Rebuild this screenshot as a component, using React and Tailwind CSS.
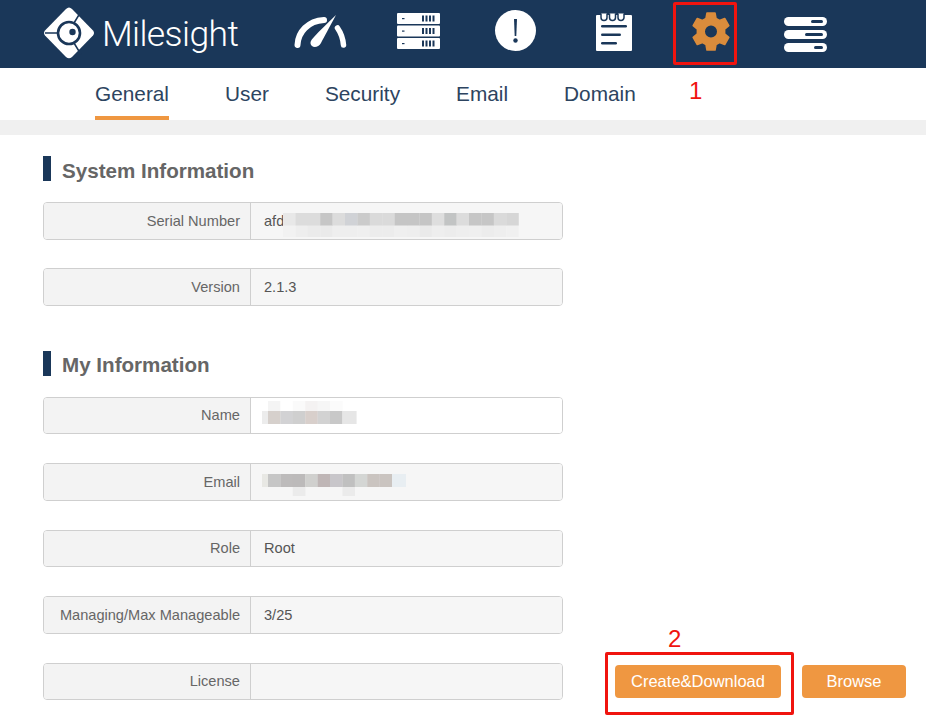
const FONT = "font-['Liberation_Sans',Arial,sans-serif]";

function Logo() {
  return (
    <svg width="52" height="52" viewBox="0 0 52 52" className="shrink-0">
      <path d="M26 0.5 Q27.5 0.5 29 2 L50 23.5 Q52 26 50 28.5 L29 50 Q26 52.5 23 50 L2 28.5 Q0 26 2 23.5 L23 2 Q24.5 0.5 26 0.5Z" fill="#fff" />
      <path d="M2 26 L15 26 M31 16 L38 4.5 M31 36 L38 47.5" stroke="#1a3759" strokeWidth="1.5" fill="none" />
      <circle cx="26" cy="26" r="11" fill="#fff" stroke="#1a3759" strokeWidth="2.6" />
      <circle cx="29.5" cy="25" r="3.2" fill="#1a3759" />
    </svg>
  );
}

function Gauge() {
  return (
    <svg width="53" height="33" viewBox="0 0 53 33" className="shrink-0">
      <path d="M3.5 30 C4 17 14 6 30 5" stroke="#fff" strokeWidth="6" strokeLinecap="round" fill="none" />
      <path d="M43.5 13 C47 18 49 24 49.5 30" stroke="#fff" strokeWidth="5.5" strokeLinecap="round" fill="none" />
      <path d="M42 0 C35 13 30 22 27 28 C25 32 20 33 18 31 C15 28 17 25 20 22 C26 15 34 8 42 0Z" fill="#fff" />
    </svg>
  );
}

function Server() {
  const rows = [0, 12.5, 25];
  return (
    <svg width="43" height="37" viewBox="0 0 43 37" className="shrink-0">
      {rows.map((y) => (
        <g key={y}>
          <rect x="0" y={y} width="43" height="11" rx="1" fill="#fff" />
          <rect x="5" y={y + 5} width="2.5" height="1.2" fill="#1a3759" />
          {[25, 28.5, 32, 35.5].map((x) => (
            <rect key={x} x={x} y={y + 2.5} width="2" height="6" fill="#1a3759" />
          ))}
        </g>
      ))}
    </svg>
  );
}

function Alert() {
  return (
    <svg width="41" height="41" viewBox="0 0 41 41" className="shrink-0">
      <circle cx="20.5" cy="20.5" r="20.5" fill="#fff" />
      <path d="M19 9 L22 9 L21.3 26 L19.7 26Z" fill="#1a3759" />
      <circle cx="20.5" cy="30.5" r="2.2" fill="#1a3759" />
    </svg>
  );
}

function Notebook() {
  return (
    <svg width="36" height="40" viewBox="0 0 36 40" className="shrink-0">
      <path d="M1 4 H35 Q36 4 36 5 V39 Q36 40 35 40 H1 Q0 40 0 39 V5 Q0 4 1 4Z" fill="#fff" />
      {[8, 16.5, 25].map((x) => (
        <path key={x} d={`M${x - 3} 2.5 V6.5 A3 3 0 0 0 ${x + 3} 6.5 V2.5`} fill="#fff" stroke="#1a3759" strokeWidth="1.5" />
      ))}
      <rect x="5" y="14" width="26" height="2.6" rx="1.3" fill="#1a3759" />
      <rect x="5" y="22.5" width="20" height="2.6" rx="1.3" fill="#1a3759" />
      <rect x="5" y="31" width="16" height="2.6" rx="1.3" fill="#1a3759" />
    </svg>
  );
}

function Gear() {
  return (
    <svg width="38" height="39" viewBox="0 0 38 39" className="shrink-0">
      <path
        fillRule="evenodd"
        fill="#da8c3c"
        stroke="#da8c3c"
        strokeWidth="1.6"
        strokeLinejoin="round"
        d="M15 1 H23 L24 6.5 L27.5 8.4 L32.7 6.5 L36.8 13.6 L32.6 17.2 V21.8 L36.8 25.4 L32.7 32.5 L27.5 30.6 L24 32.5 L23 38 H15 L14 32.5 L10.5 30.6 L5.3 32.5 L1.2 25.4 L5.4 21.8 V17.2 L1.2 13.6 L5.3 6.5 L10.5 8.4 L14 6.5Z M19 12.7 A6.8 6.8 0 1 0 19 26.3 A6.8 6.8 0 1 0 19 12.7Z"
      />
    </svg>
  );
}

function Sliders() {
  const rows = [
    { y: 0, x: 27, w: 12 },
    { y: 13, x: 21, w: 18 },
    { y: 26, x: 30, w: 9 },
  ];
  return (
    <svg width="43" height="35" viewBox="0 0 43 35" className="shrink-0">
      {rows.map((r) => (
        <g key={r.y}>
          <rect x="0" y={r.y} width="43" height="9" rx="4.5" fill="#fff" />
          <rect x={r.x} y={r.y + 3} width={r.w} height="3" rx="1.5" fill="#1a3759" />
        </g>
      ))}
    </svg>
  );
}

/* pixelated redaction patch: a list of [x, y, w, h, colour] */
function Pixels({ width, height, className, cells }) {
  return (
    <svg width={width} height={height} viewBox={`0 0 ${width} ${height}`} className={className}>
      {cells.map(([x, y, w, h, c], i) => (
        <rect key={i} x={x} y={y} width={w + 0.2} height={h} fill={c} />
      ))}
    </svg>
  );
}

const CELL = 12.4;
const rowOf = (colours, y, h, start = 0) =>
  colours.map((c, i) => [start + i * CELL, y, CELL, h, c]);

const SERIAL = [
  ...rowOf(["#f2f2f2", "#eeeeee", "#ebebeb", "#eaeaea", "#eeeeee", "#eeeeee", "#efefef", "#ececec", "#ececec", "#efefef", "#eeeeee", "#eaeaea", "#eeeeee", "#ececec", "#eeeeee", "#efefef", "#ececec", "#eeeeee", "#f0f0f0"], 13, 12),
  ...rowOf(["#e8e8e8", "#dcdcdc", "#dcdcdc", "#c6c6c6", "#dcdcdc", "#d0d2d6", "#cbcbcb", "#dadada", "#dadada", "#c5c5c5", "#c5c5c5", "#c5c5c5", "#dedede", "#c2c4c4", "#dcdcdc", "#c6c6c6", "#c6c6c6", "#dadada", "#d6d6d6"], 1, 12.5),
];

const NAME = [
  ...rowOf(["#f4f4f4", "#ffffff", "#fafafa", "#f4f2f2", "#f6f6f6", "#fbfbfb"], 0, 10, 6),
  [0, 10, 6, 13, "#ececec"],
  ...rowOf(["#d6d0cc", "#d2d2d4", "#cfcfcf", "#d8cfcb", "#d2d2d2", "#c8c8c8"], 10, 13, 6),
  [80.4, 10, 14, 13, "#e6e6e6"],
];

const EMAIL = [
  [0, 0, 6, 13, "#e8e8e4"],
  ...rowOf(["#c6c6c6", "#bdbbbb", "#bcbaba", "#d0d0ce", "#bfb6b6", "#c8c6ca", "#c0c0c0", "#d4d6d4", "#cac4c0", "#cac4c0"], 0, 13, 6),
  [130, 0, 14, "13", "#e8eef2"],
  [30.8, 13, 12.4, 9, "#ebebeb"],
  [80.4, 13, 12.4, 9, "#ebebeb"],
];

function Row({ label, children, white = false }) {
  return (
    <div className="flex h-[37.5px] w-[520px] shrink-0 overflow-hidden rounded-[4px] border border-[#cfcfcf]">
      <div className="flex w-[207px] shrink-0 items-center justify-end border-r border-[#cfcfcf] bg-[#f3f3f3] pr-[10px] pt-[1.5px] text-[14.6px] text-[#666]">
        {label}
      </div>
      <div className={`relative flex flex-1 items-center pl-[13px] pt-[1.5px] text-[14.6px] text-[#555] ${white ? "bg-white" : "bg-[#f6f6f6]"}`}>
        {children}
      </div>
    </div>
  );
}

function Heading({ children }) {
  return (
    <div className="flex h-[25px] items-center gap-[11px]">
      <div className="h-[25px] w-[8px] bg-[#1a3759]" />
      <h2 className="pt-[4px] text-[20.6px] font-bold leading-[28px] text-[#666]">{children}</h2>
    </div>
  );
}

export default function App() {
  return (
    <div className={`relative h-[726px] w-[926px] overflow-hidden bg-white ${FONT}`}>
      <header className="flex h-[68px] items-start bg-[#1a3759] pl-[43px]">
        <div className="mt-[5px] flex items-center">
          <Logo />
          <span className="ml-[7px] w-[136px] pt-[3px] font-['Roboto',sans-serif] text-[35.5px] font-light leading-[52px] tracking-[-0.6px] text-white">
            Milesight
          </span>
        </div>
        <div className="ml-[56px] mt-[15px]"><Gauge /></div>
        <div className="ml-[50px] mt-[13px]"><Server /></div>
        <div className="ml-[55px] mt-[10px]"><Alert /></div>
        <div className="ml-[60px] mt-[11px]"><Notebook /></div>
        <div className="ml-[60px] mt-[12px]"><Gear /></div>
        <div className="ml-[54px] mt-[17px]"><Sliders /></div>
      </header>

      <nav className="flex h-[52px] gap-[56px] pl-[95px] text-[20.8px] text-[#2d4460]">
        <div className="flex h-full items-center border-b-[4px] border-[#ef9741] pt-[4px]">General</div>
        <div className="flex h-full items-center">User</div>
        <div className="flex h-full items-center">Security</div>
        <div className="flex h-full items-center">Email</div>
        <div className="flex h-full items-center">Domain</div>
      </nav>
      <div className="h-[15px] bg-[#f0f0f0]" />

      <main className="pl-[43px] pt-[21px]">
        <Heading>System Information</Heading>
        <div className="mt-[21px] flex flex-col gap-[28.5px]">
          <Row label="Serial Number">
            <span>afd</span>
            <Pixels width={236} height={26} className="absolute left-[32px] top-[9px]" cells={SERIAL} />
          </Row>
          <Row label="Version">2.1.3</Row>
        </div>

        <div className="mt-[45px]"><Heading>My Information</Heading></div>
        <div className="mt-[21px] flex flex-col gap-[29px]">
          <Row label="Name" white>
            <Pixels width={95} height={23} className="absolute left-[11px] top-[3px]" cells={NAME} />
          </Row>
          <Row label="Email">
            <Pixels width={144} height={22} className="absolute left-[11px] top-[10px]" cells={EMAIL} />
          </Row>
          <Row label="Role">Root</Row>
          <Row label="Managing/Max Manageable">3/25</Row>
          <div className="flex items-center">
            <Row label="License" />
            <button className="ml-[52px] h-[33px] w-[166px] rounded-[4px] bg-[#ef9741] text-[16.5px] text-white">Create&amp;Download</button>
            <button className="ml-[21px] h-[33px] w-[104px] rounded-[4px] bg-[#ef9741] text-[16.5px] text-white">Browse</button>
          </div>
        </div>
      </main>

      {/* annotation overlays */}
      <div className="absolute left-[673px] top-[2px] h-[63px] w-[64px] rounded-[2px] border-[3px] border-[#f0140f]" />
      <span className="absolute left-[689px] top-[77px] text-[24px] leading-[28px] text-[#f0140f]">1</span>
      <div className="absolute left-[605px] top-[652px] h-[63px] w-[189px] rounded-[2px] border-[3px] border-[#f0140f]" />
      <span className="absolute left-[668px] top-[625px] text-[24px] leading-[28px] text-[#f0140f]">2</span>
    </div>
  );
}
